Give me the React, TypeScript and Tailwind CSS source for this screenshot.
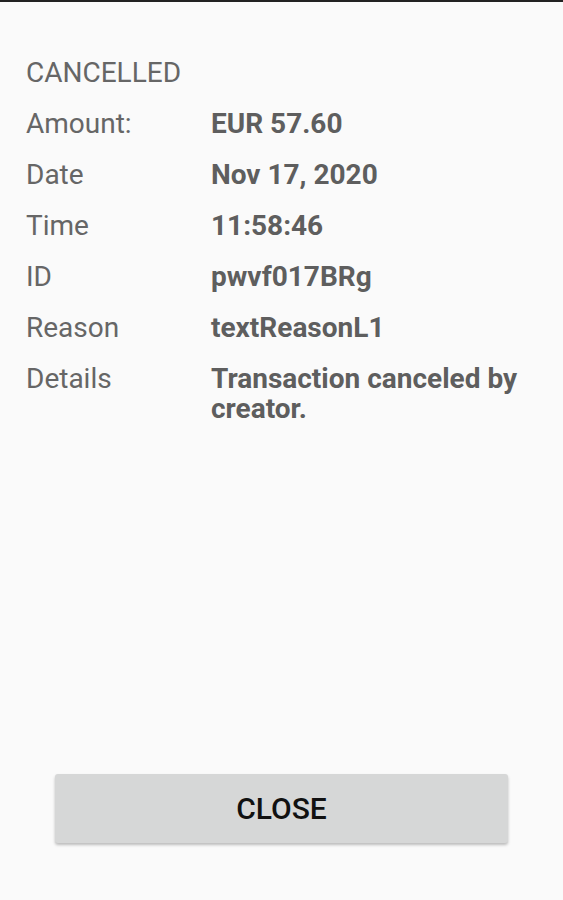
export default function App() {
  const rows: [string, string][] = [
    ["Amount:", "EUR 57.60"],
    ["Date", "Nov 17, 2020"],
    ["Time", "11:58:46"],
    ["ID", "pwvf017BRg"],
    ["Reason", "textReasonL1"],
    ["Details", "Transaction canceled by creator."],
  ];

  return (
    <div
      className="h-screen flex flex-col bg-[#fafafa] border-t-2 border-[#222] text-[#666]"
      style={{ fontFamily: "Roboto, 'Noto Sans', sans-serif" }}
    >
      <div className="flex flex-col gap-[21px] pt-[56px] pl-[26px] pr-[20px] text-[28px] leading-[30px]">
        <div>CANCELLED</div>
        {rows.map(([label, value]) => (
          <div key={label} className="flex">
            <div className="w-[185px] shrink-0">{label}</div>
            <div className="font-bold text-[#5e5e5e]">{value}</div>
          </div>
        ))}
      </div>

      <div className="mt-auto px-[55px] pb-[57px]">
        <button className="w-full h-[69px] rounded-[3px] bg-[#d6d7d7] shadow-[0_2px_3px_rgba(0,0,0,0.25)] text-[30px] font-medium text-[#111] flex items-center justify-center">
          CLOSE
        </button>
      </div>
    </div>
  );
}
